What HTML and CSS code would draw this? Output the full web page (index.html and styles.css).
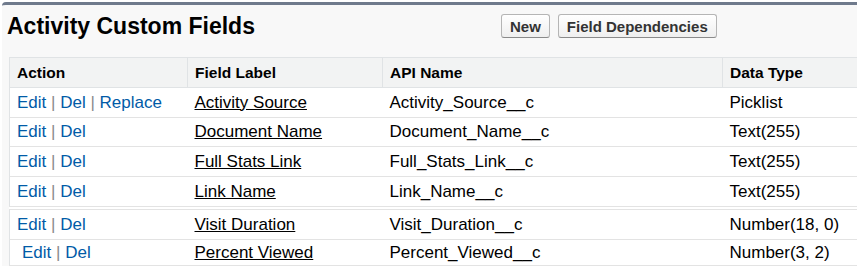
FILE: index.html
```html
<!DOCTYPE html>
<html>
<head>
<meta charset="utf-8">
<link rel="stylesheet" href="styles.css">
</head>
<body>
<div class="block">
  <div class="pb-header">
    <h2 class="title">Activity Custom Fields</h2>
    <div class="buttons">
      <button class="btn">New</button>
      <button class="btn">Field Dependencies</button>
    </div>
  </div>
  <table class="list">
    <colgroup>
      <col class="c-action"><col class="c-label"><col class="c-api"><col class="c-type">
    </colgroup>
    <thead>
      <tr class="head-row">
        <th>Action</th><th>Field Label</th><th>API Name</th><th>Data Type</th>
      </tr>
    </thead>
    <tbody>
      <tr>
        <td><a class="act">Edit</a> <span class="sep">|</span> <a class="act">Del</a> <span class="sep">|</span> <a class="act">Replace</a></td>
        <td><a class="lbl">Activity Source</a></td><td>Activity_Source__c</td><td>Picklist</td>
      </tr>
      <tr class="row-short">
        <td><a class="act">Edit</a> <span class="sep">|</span> <a class="act">Del</a></td>
        <td><a class="lbl">Document Name</a></td><td>Document_Name__c</td><td>Text(255)</td>
      </tr>
      <tr>
        <td><a class="act">Edit</a> <span class="sep">|</span> <a class="act">Del</a></td>
        <td><a class="lbl">Full Stats Link</a></td><td>Full_Stats_Link__c</td><td>Text(255)</td>
      </tr>
      <tr class="row-split">
        <td><a class="act">Edit</a> <span class="sep">|</span> <a class="act">Del</a></td>
        <td><a class="lbl">Link Name</a></td><td>Link_Name__c</td><td>Text(255)</td>
      </tr>
      <tr class="row-tall">
        <td><a class="act">Edit</a> <span class="sep">|</span> <a class="act">Del</a></td>
        <td><a class="lbl">Visit Duration</a></td><td>Visit_Duration__c</td><td>Number(18, 0)</td>
      </tr>
      <tr class="row-shift">
        <td><a class="act">Edit</a> <span class="sep">|</span> <a class="act">Del</a></td>
        <td><a class="lbl">Percent Viewed</a></td><td>Percent_Viewed__c</td><td>Number(3, 2)</td>
      </tr>
    </tbody>
  </table>
</div>
</body>
</html>
```
FILE: styles.css
```css
html, body {
  margin: 0;
  padding: 0;
  background: #ffffff;
  overflow: hidden;
}
body {
  font-family: "Liberation Sans", Arial, Helvetica, sans-serif;
  color: #000;
  width: 857px;
  height: 271px;
}
.block {
  margin: 2px 0 0 2px;
  background: #f8f8f8;
  border-top: 3px solid #6f7a8c;
  border-top-left-radius: 4px;
  padding: 0 0 0 7px;
  width: 960px;
}
.pb-header {
  display: flex;
  align-items: flex-start;
  height: 52px;
}
.title {
  margin: 0 0 0 -2px;
  padding-top: 9px;
  font-size: 23px;
  line-height: 25px;
  font-weight: bold;
  color: #000;
  width: 494px;
  flex: none;
}
.buttons {
  display: flex;
  gap: 8px;
  padding-top: 9px;
}
.btn {
  font-family: inherit;
  font-size: 15px;
  font-weight: bold;
  color: #333;
  height: 24px;
  padding: 0 8px;
  border: 1px solid #b5b5b5;
  border-bottom-color: #8a8a8a;
  border-radius: 3px;
  background: linear-gradient(#ffffff, #efefef);
}
.list {
  border-collapse: collapse;
  table-layout: fixed;
  width: 950px;
  background: #fff;
  border-left: 1px solid #e0e3e5;
  border-top: 1px solid #e0e3e5;
  font-size: 17px;
}
.c-action { width: 178px; }
.c-label { width: 195px; }
.c-api { width: 340px; }
.c-type { width: 237px; }
.head-row th {
  background: #f2f3f3;
  text-align: left;
  font-size: 15.5px;
  font-weight: bold;
  height: 29px;
  padding: 0 0 0 7px;
  border-right: 1px solid #e0e3e5;
  border-bottom: 1px solid #e0e3e5;
}
.list td {
  height: 29px;
  padding: 0 0 0 7px;
  border-bottom: 1px solid #e3e3e3;
  white-space: nowrap;
}
.act {
  color: #015ba7;
  text-decoration: none;
}
.sep {
  color: #8a8a8a;
}
.lbl {
  color: #000;
  text-decoration: underline;
}
.row-short td {
  height: 28px;
}
.row-split td {
  border-bottom: 4px double #e3e3e3;
  height: 29px;
}
.row-tall td {
  height: 29px;
}
.row-shift td:first-child {
  padding-left: 12px;
}
.row-shift td {
  height: 25px;
}
```
